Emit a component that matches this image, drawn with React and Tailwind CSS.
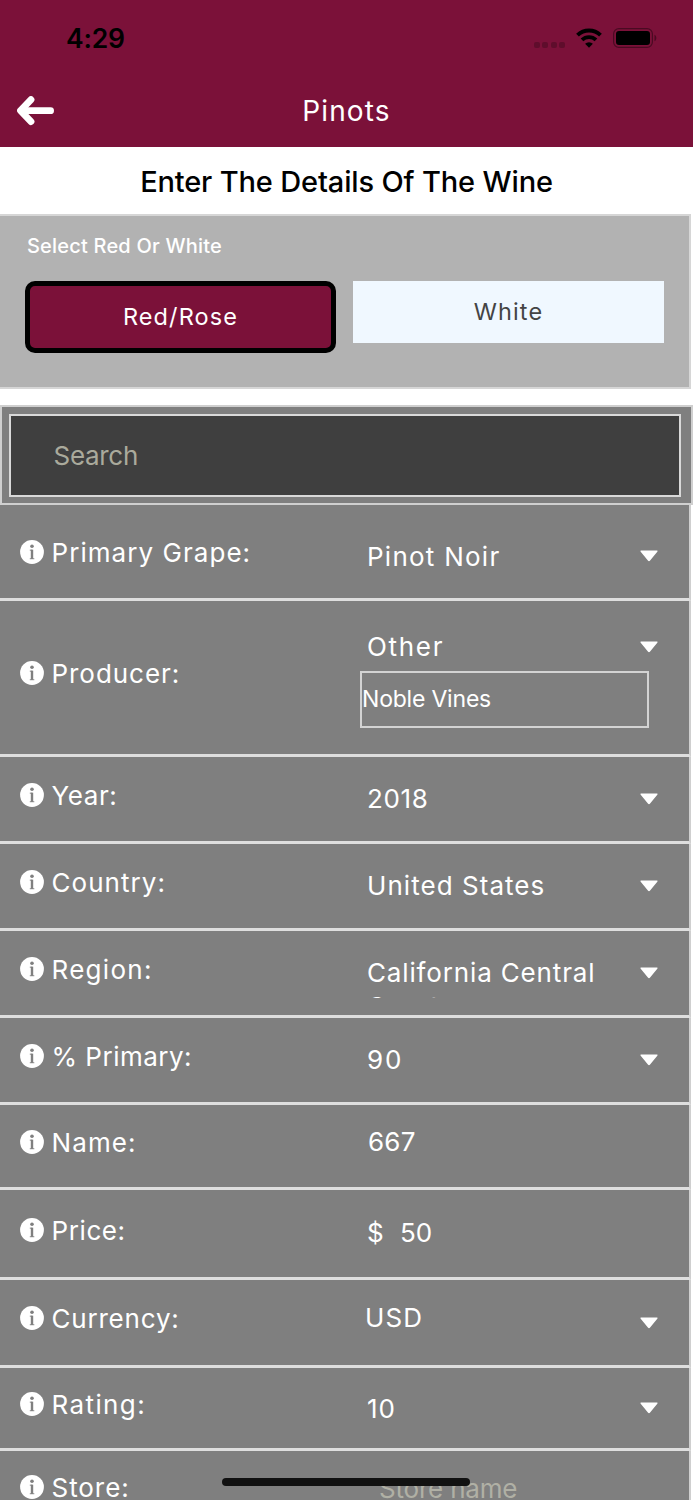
import React, { useState } from 'react';

// One entry per form row, heights include the divider at the bottom
const rows = [
  { id: 'grape', label: 'Primary Grape:', value: 'Pinot Noir', caret: true, row: 'h-[96px]', left: 'pt-[33px]', right: 'pt-[37px]', caretPos: 'pt-[45px]', tracking: 'tracking-[1.05px]', valueTracking: 'tracking-[1.25px]' },
  { id: 'producer', label: 'Producer:', value: 'Other', caret: true, other: 'Noble Vines', row: 'h-[156px]', left: 'pt-[58px]', right: 'pt-[31px]', caretPos: 'pt-[40px]', tracking: 'tracking-[0.95px]', valueTracking: 'tracking-[1.7px]' },
  { id: 'year', label: 'Year:', value: '2018', caret: true, row: 'h-[87px]', left: 'pt-[24px]', right: 'pt-[27px]', caretPos: 'pt-[36px]', tracking: 'tracking-[0.6px]', valueTracking: 'tracking-[0.6px]' },
  { id: 'country', label: 'Country:', value: 'United States', caret: true, row: 'h-[87px]', left: 'pt-[24px]', right: 'pt-[27px]', caretPos: 'pt-[36px]', tracking: 'tracking-[1.05px]', valueTracking: 'tracking-[1.05px]' },
  { id: 'region', label: 'Region:', value: 'California Central', caret: true, clipped: 'Coast', row: 'h-[87px]', left: 'pt-[24px]', right: 'pt-[27px]', caretPos: 'pt-[36px]', tracking: 'tracking-[1.3px]', valueTracking: 'tracking-[0.85px]' },
  { id: 'percent', label: '% Primary:', value: '90', caret: true, row: 'h-[87px]', left: 'pt-[24px]', right: 'pt-[27px]', caretPos: 'pt-[36px]', tracking: 'tracking-[0.5px]', valueTracking: 'tracking-[2px]' },
  { id: 'name', label: 'Name:', value: '667', row: 'h-[85px]', left: 'pt-[23px]', right: 'pt-[22px] pl-[1px]', tracking: 'tracking-[1.1px]', valueTracking: 'tracking-[0.2px]' },
  { id: 'price', label: 'Price:', value: '50', prefix: '$', row: 'h-[90px]', left: 'pt-[26px]', right: 'pt-[28px]', tracking: 'tracking-[0.6px]', valueTracking: 'tracking-[0px]' },
  { id: 'currency', label: 'Currency:', value: 'USD', caret: true, row: 'h-[88px]', left: 'pt-[24px]', right: 'pt-[23px] -ml-[2px]', caretPos: 'pt-[37px]', tracking: 'tracking-[0.8px]', valueTracking: 'tracking-[1.1px]' },
  { id: 'rating', label: 'Rating:', value: '10', caret: true, row: 'h-[83px]', left: 'pt-[22px]', right: 'pt-[26px]', caretPos: 'pt-[34px]', tracking: 'tracking-[1.4px]', valueTracking: 'tracking-[0.8px]' },
  { id: 'store', label: 'Store:', placeholder: 'Store name', row: 'h-[87px]', left: 'pt-[22px]', right: 'pt-[23px] pl-[12px]', tracking: 'tracking-[0.95px]', valueTracking: '-tracking-[0.2px]' },
];

const StatusBar = () => (
  <div className="flex h-[76px] items-center justify-between pl-[66px] pr-[36px]">
    <span className="text-[26.5px] font-semibold leading-8 -tracking-[0.2px] text-black">4:29</span>
    <div className="flex items-center gap-[11px]">
      <div className="flex gap-[2.5px] pt-[13px]">
        {[0, 1, 2, 3].map((dot) => (
          <span key={dot} className="h-[6px] w-[6px] rounded-[2px] bg-[#5f0d2c]" />
        ))}
      </div>
      <svg className="h-[20px] w-[26px]" viewBox="0 0 26 20" fill="none" stroke="#000">
        <path d="M1.5 7.2a16.3 16.3 0 0 1 23 0" strokeWidth="3.9" />
        <path d="M6 11.9a10 10 0 0 1 14 0" strokeWidth="3.8" />
        <path d="M13 19.8l-3.9-4a5.4 5.4 0 0 1 7.8 0z" fill="#000" stroke="none" />
      </svg>
      <svg className="h-[20px] w-[44px]" viewBox="0 0 44 20">
        <rect x="0.6" y="0.6" width="38.8" height="18.8" rx="5.4" fill="none" stroke="#4a0a22" strokeWidth="1.2" />
        <rect x="3" y="3" width="34" height="14" rx="3" fill="#000" />
        <path d="M41.5 6.7c2.4 1 2.4 5.6 0 6.6z" fill="#4a0a22" />
      </svg>
    </div>
  </div>
);

const InfoIcon = () => (
  <svg className="mb-[2px] h-[24px] w-[24px] shrink-0" viewBox="0 0 24 24">
    <circle cx="12" cy="12" r="11.9" fill="#fff" />
    <g fill="#7f7f7f">
      <circle cx="12" cy="6.3" r="1.8" />
      <rect x="10.8" y="9.7" width="2.4" height="9.2" />
      <rect x="9.8" y="9.7" width="2.5" height="0.9" />
      <rect x="9.8" y="18.3" width="4.5" height="0.9" />
    </g>
  </svg>
);

const Caret = () => (
  <svg className="h-[12px] w-[18px]" viewBox="0 0 18 12" fill="#fff">
    <path d="M1.2 0.5H16.8C17.6 0.5 17.8 1.2 17.3 1.7L9.9 10.7C9.4 11.3 8.6 11.3 8.1 10.7L0.7 1.7C0.2 1.2 0.4 0.5 1.2 0.5Z" />
  </svg>
);

const FormRow = ({ item }) => (
  <div className={`flex w-[691px] shrink-0 items-start border-b-[3px] border-r-2 border-b-[#dedede] border-r-[#cfcfcf] bg-[#7f7f7f] text-[26px] text-white ${item.row}`}>
    <div className={`flex w-[367px] items-center pl-[20px] ${item.left}`}>
      <InfoIcon />
      <span className={`ml-[7.5px] whitespace-nowrap leading-[30px] ${item.tracking}`}>{item.label}</span>
    </div>
    <div className="flex w-[273px] flex-col">
      <div className={`flex whitespace-nowrap leading-[30px] ${item.right} ${item.valueTracking}`}>
        {item.prefix && <span className="w-[33px]">{item.prefix}</span>}
        {item.value && <span>{item.value}</span>}
        {item.placeholder && <span className="text-[#b0b0a5]">{item.placeholder}</span>}
      </div>
      {/* Second line of a long value, only its top shows */}
      {item.clipped && (
        <div className="h-[10px] overflow-hidden leading-[38px]">{item.clipped}</div>
      )}
      {item.other && (
        <div className="-ml-[7px] mt-[9px] flex h-[57px] w-[289px] items-center border-2 border-[#d3d3d3] pb-[1px] text-[23px] -tracking-[0.2px]">
          {item.other}
        </div>
      )}
    </div>
    {item.caret && (
      <div className={item.caretPos}>
        <Caret />
      </div>
    )}
  </div>
);

export default function App() {
  const [color] = useState('red');

  return (
    <div className="relative flex h-[1500px] w-[693px] flex-col overflow-hidden bg-white font-['Inter',sans-serif]">
      {/* Header */}
      <header className="h-[147px] shrink-0 bg-[#7b1139]">
        <StatusBar />
        <div className="grid h-[70px] grid-cols-3 items-center">
          <svg className="ml-[17px] h-[30px] w-[38px]" viewBox="0 0 38 30" fill="none" stroke="#fff" strokeWidth="6.8" strokeLinecap="round" strokeLinejoin="round">
            <path d="M14 3.6L3.5 14.7L14 25.6" />
            <path d="M5 14.7H33.6" />
          </svg>
          <h1 className="text-center text-[28px] leading-8 tracking-[1.1px] text-white">Pinots</h1>
        </div>
      </header>

      <h2 className="h-[67px] shrink-0 text-center text-[29px] font-medium leading-[70px] -tracking-[0.15px] text-black">
        Enter The Details Of The Wine
      </h2>

      {/* Red / white selector */}
      <section className="h-[175px] w-[691px] shrink-0 border-y-2 border-r-2 border-[#d6d6d6] bg-[#b2b2b2] pl-[25px]">
        <p className="pl-[2px] pt-[15px] text-[20px] font-medium leading-[30px] tracking-[0.2px] text-white">Select Red Or White</p>
        <div className="mt-[20px] flex items-start gap-[17px] text-[23.5px]">
          <button className={`h-[72px] w-[311px] rounded-[10px] bg-[#7b1139] tracking-[1.1px] text-white ${color === 'red' ? 'border-[5px] border-black' : ''}`}>
            Red/Rose
          </button>
          <button className="h-[62px] w-[311px] bg-[#f0f8ff] tracking-[1.1px] text-[#444]">White</button>
        </div>
      </section>

      {/* Search */}
      <div className="mt-[16px] h-[100px] shrink-0 border-2 border-[#cfcfcf] bg-[#7f7f7f] pl-[6.5px] pt-[6.5px]">
        <div className="flex h-[83px] w-[672px] items-center border-2 border-[#d9d9d9] bg-[#3f3f3f] pl-[43px] text-[26px] -tracking-[0.3px] text-[#aaaa9c]">
          Search
        </div>
      </div>

      {/* Form */}
      {rows.map((item) => (
        <FormRow key={item.id} item={item} />
      ))}

      {/* Home indicator */}
      <div className="absolute left-[222px] top-[1478px] h-[8px] w-[248px] rounded-full bg-[#111]" />
    </div>
  );
}
